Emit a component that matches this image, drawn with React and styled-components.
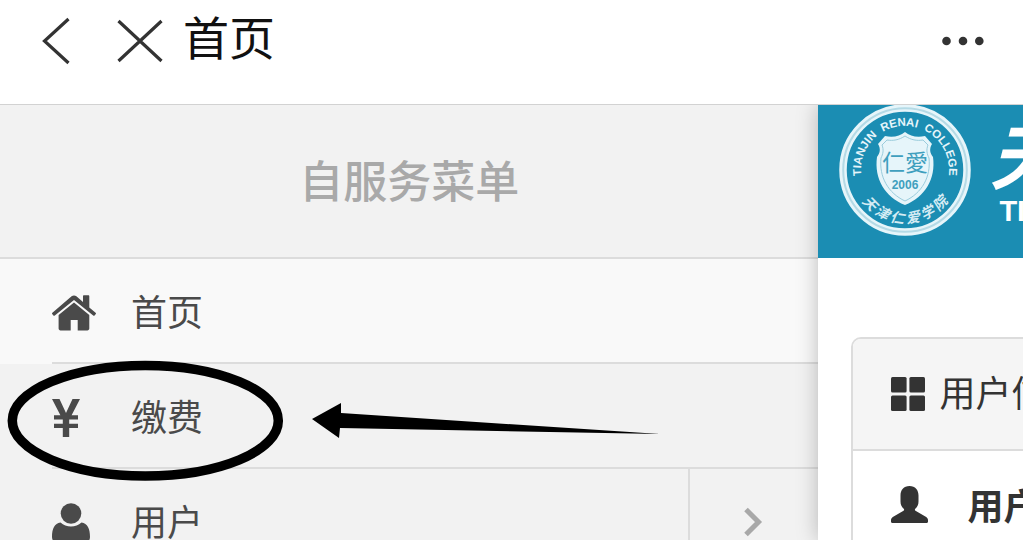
import React from 'react'
import styled, { createGlobalStyle } from 'styled-components'

const GlobalStyle = createGlobalStyle`
  * {
    box-sizing: border-box;
  }
  body {
    margin: 0;
    background: #fff;
    font-family: 'Noto Sans CJK SC', 'Liberation Sans', sans-serif;
  }
  h1, h2, ul {
    margin: 0;
    padding: 0;
  }
  svg {
    display: block;
    flex: none;
  }
`

const Page = styled.div`
  display: flex;
  flex-direction: column;
  height: 100vh;
  overflow: hidden;
`

const TitleBar = styled.header`
  display: flex;
  align-items: center;
  flex: none;
  padding: 2px 38px 24px 41px;
  border-bottom: 1px solid #d2d2d2;
`

const IconButton = styled.button`
  padding: 0;
  margin-right: ${props => props.$gap || 0}px;
  border: 0;
  background: none;
  color: #333;
`

const PageTitle = styled.h1`
  flex: 1;
  padding-bottom: 12px;
  color: #111;
  font-size: 46px;
  font-weight: 400;
  line-height: 66px;
`

const Columns = styled.div`
  display: flex;
  flex: 1;
  min-height: 0;
  overflow: hidden;
`

const Drawer = styled.nav`
  flex: none;
  width: 80%;
  background: #f2f2f2;
`

const DrawerTitle = styled.h2`
  padding: 42px 0 46px;
  border-bottom: 2px solid #dcdcdc;
  color: #a9a9a9;
  font-size: 44px;
  font-weight: 500;
  line-height: 64px;
  text-align: center;
`

const Menu = styled.ul`
  list-style: none;
`

const MenuItem = styled.li`
  position: relative;
  padding-left: 52px;
  background: ${props => (props.$active ? '#f9f9f9' : '#f2f2f2')};
`

const MenuRow = styled.div`
  display: flex;
  height: 105px;
  border-bottom: 2px solid #dcdcdc;
`

const MenuLink = styled.a`
  display: flex;
  flex: 1;
  align-items: center;
  padding-top: 5px;
  color: #4a4a4a;
  font-size: 36px;
  line-height: 52px;
  text-decoration: none;
`

const MenuIcon = styled.span`
  width: 79px;
`

const Label = styled.span`
  padding-bottom: 6px;
`

const Expander = styled.button`
  display: flex;
  align-items: center;
  justify-content: center;
  width: 130px;
  padding: 2px 2px 0 0;
  border: 0;
  border-left: 2px solid #dcdcdc;
  background: none;
  color: #a8a8a8;
`

const Marker = styled.svg`
  position: absolute;
  z-index: 1;
  top: -6px;
  left: 0;
  pointer-events: none;
`

const Content = styled.main`
  position: relative;
  z-index: 2;
  flex: 1;
  min-width: 0;
  overflow: hidden;
  background: #fff;
  box-shadow: 0 0 20px rgba(0, 0, 0, 0.25);
`

const Banner = styled.div`
  display: flex;
  gap: 18px;
  height: 153px;
  padding-left: 21px;
  background: #1b8db3;
  color: #fff;
`

const BannerName = styled.div`
  flex: none;
  padding-top: 7px;
`

const BannerChinese = styled.div`
  font-size: 72px;
  font-style: italic;
  font-weight: 700;
  line-height: 82px;
`

const BannerLatin = styled.div`
  padding-left: 10px;
  font-family: 'Liberation Sans', sans-serif;
  font-size: 29px;
  font-weight: 700;
  line-height: 34px;
`

const Card = styled.section`
  width: 100vw;
  margin: 79px 0 0 33px;
  border: 2px solid #dcdcdc;
  border-radius: 10px;
`

const CardHead = styled.div`
  display: flex;
  align-items: center;
  gap: 14px;
  height: 112px;
  padding-left: 38px;
  border-bottom: 2px solid #dcdcdc;
  border-radius: 8px 8px 0 0;
  background: #f5f5f5;
  color: #333;
`

const CardTitle = styled.h2`
  padding-bottom: 6px;
  font-size: 36px;
  font-weight: 400;
  line-height: 52px;
`

const CardRow = styled.div`
  display: flex;
  align-items: center;
  gap: 39px;
  height: 106px;
  padding-left: 38px;
  color: #333;
  font-size: 36px;
  font-weight: 700;
  line-height: 52px;
`

const HomeIcon = () => (
  <svg width="44" height="36" viewBox="0 0 44 36" fill="currentColor">
    <path d="M22 0.4c.9 0 1.7.3 2.4.9L31 7V1.2c0-.6.4-1 1-1h4.300c.6 0 1 .4 1 1v11.300l6.300 5.300c.5.4.5.9.2 1.300l-1.200 1.400c-.4.4-.9.5-1.400.1L22 4.900 2.800 20.600c-.5.4-1 .3-1.400-.1L.2 19.100c-.3-.4-.3-.9.2-1.300L19.600 1.300c.7-.6 1.500-.9 2.400-.9z" />
    <path d="M22 7.600L37.300 20v13.500c0 1.100-.8 1.900-1.900 1.900H25.700V25h-7v10.400H8.500c-1.100 0-1.900-.8-1.900-1.900V20z" />
  </svg>
)

const YenIcon = () => (
  <svg width="28" height="38" viewBox="0 0 28 38" fill="currentColor">
    <path d="M0 0h7.500L14 14 20.500 0H28l-8.400 16.200H26v4.200h-8.800v4.300H26v4.300h-8.800v9h-6.400v-9H2v-4.300h8.800v-4.300H2v-4.200h6.400z" />
  </svg>
)

const UserIcon = () => (
  <svg width="38" height="40" viewBox="0 0 38 40" fill="currentColor">
    <circle cx="19" cy="10.500" r="10.300" />
    <path d="M8.500 19.600c3 2.500 6.400 4 10.500 4s7.500-1.500 10.500-4c6 .6 8.500 6.400 8.500 14.400 0 3.800-2.600 6-6 6H6c-3.400 0-6-2.200-6-6 0-8 2.500-13.800 8.500-14.400z" />
  </svg>
)

const GridIcon = () => (
  <svg width="34" height="34" viewBox="0 0 34 34" fill="currentColor">
    <rect width="15.600" height="15.600" rx="1.500" />
    <rect x="18.400" width="15.600" height="15.600" rx="1.500" />
    <rect y="18.400" width="15.600" height="15.600" rx="1.500" />
    <rect x="18.400" y="18.400" width="15.600" height="15.600" rx="1.500" />
  </svg>
)

const PersonIcon = () => (
  <svg width="37" height="37" viewBox="0 0 37 37" fill="currentColor">
    <path d="M18.500 0c5.800 0 9 4 9 9.500v6c0 3-1 5.500-3.200 7.300-.8.8-.4 1.700.6 2.300l10.300 6c1.200.8 1.800 1.800 1.800 3.200v1.500c0 .7-.5 1.200-1.200 1.200H1.200C.5 37 0 36.500 0 35.800v-1.500c0-1.400.6-2.400 1.800-3.200l10.300-6c1-.6 1.400-1.500.6-2.300-2.200-1.800-3.200-4.300-3.200-7.300v-6C9.500 4 12.700 0 18.500 0z" />
  </svg>
)

const Seal = () => (
  <svg width="132" height="132" viewBox="0 0 132 132">
    <defs>
      <path id="seal-top" d="M26 83.300A44 44 0 1 1 106 83.300" />
      <path id="seal-bottom" d="M13.500 75A53.500 53.500 0 0 0 118.500 75" />
    </defs>
    <circle cx="66" cy="65" r="62" fill="none" stroke="#e6f5fa" strokeWidth="7.500" />
    <circle cx="66" cy="65" r="61.800" fill="none" stroke="#b4dae6" strokeWidth="2" />
    <text fill="#e6f5fa" fontFamily="Liberation Sans, sans-serif" fontSize="11.500" fontWeight="700">
      <textPath href="#seal-top" startOffset="50%" textAnchor="middle">TIANJIN&#160; RENAI&#160; COLLEGE</textPath>
    </text>
    <text fill="#d5ecf4" fontSize="14" fontStyle="italic" fontWeight="700">
      <textPath href="#seal-bottom" startOffset="50%" textAnchor="middle">天 津 仁 爱 学 院</textPath>
    </text>
    <path
      d="M66 27c5 4 12 6 20 4l7 8c-3 5-2 9 1 13 3 22-8 40-28 48-20-8-31-26-28-48 3-4 4-8 1-13l7-8c8 2 15 0 20-4z"
      fill="#e6f5fa"
    />
    <path
      d="M66 31c6 4 12 5 18 4l5 5c-2 5-1 9 1 13 2 19-7 35-24 43-17-8-26-24-24-43 2-4 3-8 1-13l5-5c6 1 12 0 18-4z"
      fill="none"
      stroke="#9accdc"
      strokeWidth="1"
    />
    <text x="66" y="66" fill="#3f9fbe" fontSize="23" textAnchor="middle">仁愛</text>
    <text x="66" y="84" fill="#3f9fbe" fontFamily="Liberation Sans, sans-serif" fontSize="12" fontWeight="700" textAnchor="middle">2006</text>
  </svg>
)

const items = [
  { label: '首页', Icon: HomeIcon, active: true },
  { label: '缴费', Icon: YenIcon, marked: true },
  { label: '用户', Icon: UserIcon, expandable: true },
]

const App = () => (
  <Page>
    <GlobalStyle />
    <TitleBar>
      <IconButton type="button" aria-label="返回" $gap={46}>
        <svg width="30" height="48" viewBox="0 0 30 48" fill="none" stroke="currentColor" strokeWidth="3.200">
          <path d="M27.500 2L3.500 24l24 22" />
        </svg>
      </IconButton>
      <IconButton type="button" aria-label="关闭" $gap={20}>
        <svg width="46" height="44" viewBox="0 0 46 44" fill="none" stroke="currentColor" strokeWidth="3.200">
          <path d="M1.500 2l43 40M44.500 2l-43 40" />
        </svg>
      </IconButton>
      <PageTitle>首页</PageTitle>
      <IconButton type="button" aria-label="更多">
        <svg width="44" height="10" viewBox="0 0 44 10" fill="currentColor">
          <circle cx="5.500" cy="5" r="4.300" />
          <circle cx="22" cy="5" r="4.300" />
          <circle cx="38.300" cy="5" r="4.300" />
        </svg>
      </IconButton>
    </TitleBar>

    <Columns>
      <Drawer>
        <DrawerTitle>自服务菜单</DrawerTitle>
        <Menu>
          {items.map(({ label, Icon, active, marked, expandable }) => (
            <MenuItem key={label} $active={active}>
              <MenuRow>
                <MenuLink href="#">
                  <MenuIcon><Icon /></MenuIcon>
                  <Label>{label}</Label>
                </MenuLink>
                {expandable && (
                  <Expander type="button" aria-label="展开">
                    <svg width="20" height="30" viewBox="0 0 20 30" fill="none" stroke="currentColor" strokeWidth="5">
                      <path d="M3 2.500L15.500 15 3 27.500" />
                    </svg>
                  </Expander>
                )}
              </MenuRow>
              {marked && (
                <Marker width="680" height="128" viewBox="0 0 680 128">
                  <ellipse cx="145.300" cy="62.700" rx="133" ry="55.300" fill="none" stroke="#000" strokeWidth="9.500" />
                  <path d="M312 61l29-16v10l319 21-320-6-1 10z" fill="#000" />
                </Marker>
              )}
            </MenuItem>
          ))}
        </Menu>
      </Drawer>

      <Content>
        <Banner>
          <Seal />
          <BannerName>
            <BannerChinese>天</BannerChinese>
            <BannerLatin>TI</BannerLatin>
          </BannerName>
        </Banner>
        <Card>
          <CardHead>
            <GridIcon />
            <CardTitle>用户信</CardTitle>
          </CardHead>
          <CardRow>
            <PersonIcon />
            用户
          </CardRow>
        </Card>
      </Content>
    </Columns>
  </Page>
)

export default App
